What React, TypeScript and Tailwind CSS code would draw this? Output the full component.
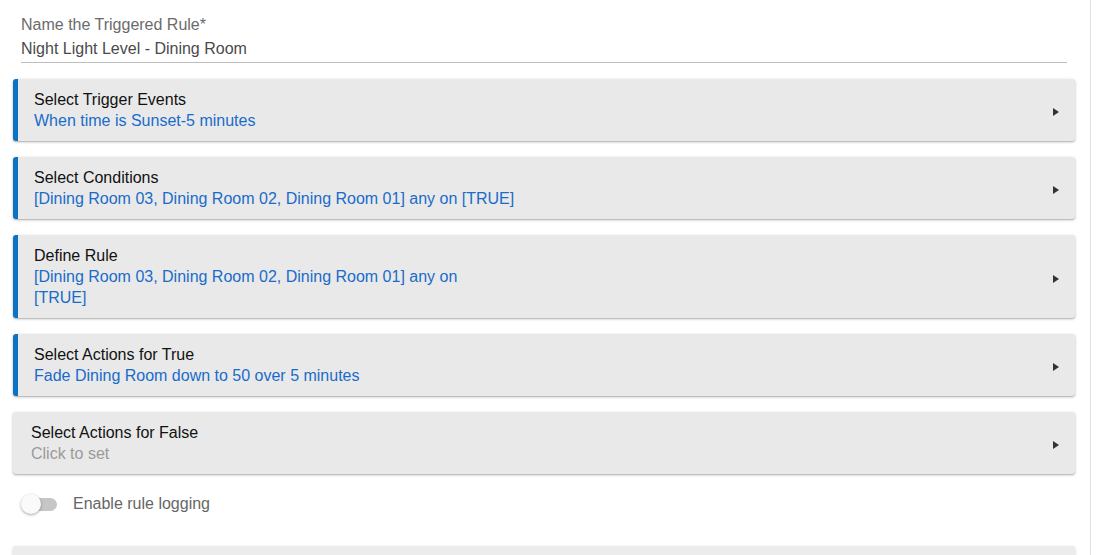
import React from "react";

const Arrow = () => (
  <svg width="8" height="10" viewBox="0 0 8 10" className="mt-[4px] shrink-0">
    <path d="M1 1 L7 5 L1 9 Z" fill="#333" />
  </svg>
);

type CardProps = { title: string; sub: React.ReactNode; active?: boolean };

const Card = ({ title, sub, active = true }: CardProps) => (
  <div
    className={`flex items-center rounded-[3px] bg-[#e9e9e9] shadow-[0_1px_3px_rgba(0,0,0,0.25),0_1px_1px_rgba(0,0,0,0.12)] ${
      active ? "border-l-[5px] border-[#0c73c2] pl-[16px]" : "pl-[18px]"
    } pr-[15px] py-[10px]`}
  >
    <div className="flex-1 text-[16px] leading-[21px]">
      <div className="text-[#111]">{title}</div>
      <div className={active ? "text-[#1a6cc9]" : "text-[#9a9a9a]"}>{sub}</div>
    </div>
    <Arrow />
  </div>
);

export default function App() {
  return (
    <div
      className="flex h-[555px] w-[1097px] overflow-hidden bg-white"
      style={{ fontFamily: '"Liberation Sans", Arial, sans-serif' }}
    >
      <div className="w-[1091px] shrink-0 border-r border-[#e2e2e2] pl-[13px] pr-[15px]">
        <div className="px-[8px] pt-[14px]">
          <div className="text-[16px] leading-[22px] text-[#6b6b6b]">Name the Triggered Rule*</div>
          <div className="border-b border-[#bdbdbd] pb-[3px] pt-[2px] text-[16px] leading-[21px] text-[#4a4a4a]">
            Night Light Level - Dining Room
          </div>
        </div>
        <div className="mt-[16px] flex flex-col gap-[16px]">
          <Card title="Select Trigger Events" sub="When time is Sunset-5 minutes" />
          <Card
            title="Select Conditions"
            sub="[Dining Room 03, Dining Room 02, Dining Room 01] any on [TRUE]"
          />
          <Card
            title="Define Rule"
            sub={
              <>
                [Dining Room 03, Dining Room 02, Dining Room 01] any on
                <br />
                [TRUE]
              </>
            }
          />
          <Card title="Select Actions for True" sub="Fade Dining Room down to 50 over 5 minutes" />
          <Card title="Select Actions for False" sub="Click to set" active={false} />
        </div>
        <div className="mt-[18px] flex items-center pl-[8px]">
          <div className="relative h-[20px] w-[36px]">
            <div className="absolute left-[2px] top-[4px] h-[13px] w-[34px] rounded-full bg-[#c6c6c6]" />
            <div className="absolute left-0 top-0 h-[20px] w-[20px] rounded-full bg-[#fafafa] shadow-[0_1px_3px_rgba(0,0,0,0.35)]" />
          </div>
          <span className="ml-[16px] text-[16px] text-[#666]">Enable rule logging</span>
        </div>
        <div className="mt-[30px] h-[40px] rounded-[3px] bg-[#ececec] shadow-[0_1px_3px_rgba(0,0,0,0.2)]" />
      </div>
      <div className="flex-1 bg-white" />
    </div>
  );
}
